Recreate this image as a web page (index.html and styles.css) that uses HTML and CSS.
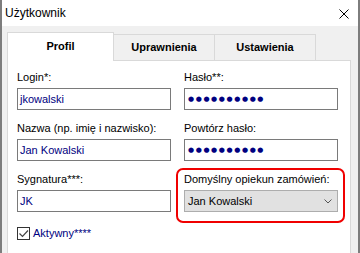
FILE: index.html
```html
<!DOCTYPE html>
<html lang="pl">
<head>
  <meta charset="UTF-8">
  <title>Użytkownik</title>
  <link rel="stylesheet" href="styles.css">
</head>
<body>
  <div class="window">
    <div class="titlebar">
      <span class="title">Użytkownik</span>
      <svg class="close" width="10" height="10" viewBox="0 0 10 10">
        <path d="M0.5 0.5 L9.5 9.5 M9.5 0.5 L0.5 9.5" stroke="#000" stroke-width="1" fill="none"/>
      </svg>
    </div>

    <div class="body">
      <!-- Zakładki -->
      <div class="tabs">
        <div class="tab active">Profil</div>
        <div class="tab">Uprawnienia</div>
        <div class="tab">Ustawienia</div>
      </div>

      <div class="panel">
        <div class="form-grid">
          <div class="field">
            <div class="label">Login*:</div>
            <div class="input">jkowalski</div>
          </div>
          <div class="field">
            <div class="label">Hasło**:</div>
            <div class="input password">●●●●●●●●●●</div>
          </div>
          <div class="field">
            <div class="label">Nazwa (np. imię i nazwisko):</div>
            <div class="input">Jan Kowalski</div>
          </div>
          <div class="field">
            <div class="label">Powtórz hasło:</div>
            <div class="input password">●●●●●●●●●●</div>
          </div>
          <div class="field">
            <div class="label">Sygnatura***:</div>
            <div class="input">JK</div>
          </div>
          <div class="field highlight">
            <div class="label">Domyślny opiekun zamówień:</div>
            <div class="select">
              <span>Jan Kowalski</span>
              <svg width="8" height="5" viewBox="0 0 8 5">
                <path d="M0.5 0.5 L4 4 L7.5 0.5" stroke="#555" stroke-width="1" fill="none"/>
              </svg>
            </div>
          </div>
        </div>

        <label class="checkbox-row">
          <span class="checkbox">
            <svg width="11" height="11" viewBox="0 0 11 11">
              <path d="M1.5 5.5 L4.5 8.5 L10 2.5" stroke="#444" stroke-width="1.2" fill="none"/>
            </svg>
          </span>
          <span class="checkbox-label">Aktywny****</span>
        </label>
      </div>
    </div>
  </div>
</body>
</html>
```

FILE: styles.css
```css
/* Podstawy */
* { margin: 0; padding: 0; box-sizing: border-box; }
html, body { width: 360px; height: 253px; overflow: hidden; }
body {
  font-family: 'Liberation Sans', Arial, sans-serif;
  font-size: 11px;
  color: #000;
  background: #fff;
}

/* Okno */
.window {
  width: 360px;
  height: 253px;
  overflow: hidden;
  border-left: 2px solid #7d7d7d;
  border-right: 2px solid #7d7d7d;
  background: #f0f0f0;
  display: flex;
  flex-direction: column;
}
.titlebar {
  flex-shrink: 0;
  height: 26px;
  background: #fff;
  display: flex;
  align-items: center;
  justify-content: space-between;
  padding: 0 9px 0 3px;
}
.title { font-size: 12px; }
.close { display: block; margin-top: 1px; }

.body { padding: 6px 0 0 5px; flex-shrink: 0; }

/* Zakładki */
.tabs { display: flex; align-items: flex-end; }
.tab {
  height: 26px;
  width: 102px;
  margin-left: -1px;
  border: 1px solid #d9d9d9;
  border-bottom: none;
  background: #f0f0f0;
  font-weight: 700;
  display: flex;
  align-items: center;
  justify-content: center;
  padding-bottom: 1px;
}
.tab.active {
  width: 107px;
  height: 29px;
  margin-left: 0;
  margin-bottom: -1px;
  background: #fff;
  position: relative;
  z-index: 1;
  padding-bottom: 2px;
}

.panel {
  width: 344px;
  height: 200px;
  background: #fff;
  border: 1px solid #d9d9d9;
  padding: 10px 0 0 9px;
}

/* Formularz */
.form-grid {
  display: grid;
  grid-template-columns: 154px 154px;
  column-gap: 13px;
  row-gap: 12px;
}
.label { line-height: 13px; height: 13px; margin-bottom: 4px; white-space: nowrap; }
.input {
  height: 22px;
  border: 1px solid #7a7a7a;
  padding-left: 2px;
  line-height: 20px;
  color: #000080;
}
.input.password {
  font-family: 'DejaVu Sans', sans-serif;
  font-size: 7px;
  letter-spacing: 1.6px;
  padding-left: 3px;
  display: flex;
  align-items: center;
}

.highlight {
  margin: -5px -7px -11px -8px;
  padding: 3px 5px 9px 6px;
  border: 2px solid #f00000;
  border-radius: 7px;
}
.select {
  height: 22px;
  border: 1px solid #adadad;
  background: #e1e1e1;
  padding: 0 5px 0 3px;
  display: flex;
  align-items: center;
  justify-content: space-between;
}
.select svg { display: block; }

/* Checkbox */
.checkbox-row {
  display: flex;
  align-items: center;
  gap: 3px;
  margin-top: 15px;
}
.checkbox {
  width: 13px;
  height: 13px;
  border: 1px solid #333;
  display: flex;
  align-items: center;
  justify-content: center;
}
.checkbox svg { display: block; }
.checkbox-label { color: #000080; line-height: 13px; }
```
